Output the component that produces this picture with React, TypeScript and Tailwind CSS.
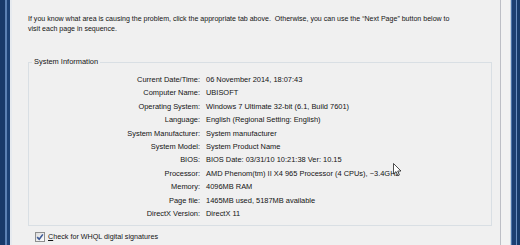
import React from "react";

const rows: [string, string][] = [
  ["Current Date/Time:", "06 November 2014, 18:07:43"],
  ["Computer Name:", "UBISOFT"],
  ["Operating System:", "Windows 7 Ultimate 32-bit (6.1, Build 7601)"],
  ["Language:", "English (Regional Setting: English)"],
  ["System Manufacturer:", "System manufacturer"],
  ["System Model:", "System Product Name"],
  ["BIOS:", "BIOS Date: 03/31/10 10:21:38 Ver: 10.15"],
  ["Processor:", "AMD Phenom(tm) II X4 965 Processor (4 CPUs), ~3.4GHz"],
  ["Memory:", "4096MB RAM"],
  ["Page file:", "1465MB used, 5187MB available"],
  ["DirectX Version:", "DirectX 11"],
];

export default function App() {
  return (
    <div className="relative flex h-[245px] w-[520px] overflow-hidden bg-[#f0f0f0] font-['Liberation_Sans',Arial,sans-serif] text-[7.45px] text-[#141414]">
      {/* left window frame */}
      <div className="w-[5px] bg-[#18396a]" />
      <div className="w-[2px] bg-[#5b80b4]" />
      <div className="w-[3px] bg-[#1c4176]" />
      <div className="w-[2px] bg-[#e6eaef]" />

      {/* tab page */}
      <div className="flex w-[489px] flex-col border-r border-[#bdbfc6] pl-[16px] pr-[8px]">
        <div className="pt-[14px] text-[7.05px] leading-[10px]">
          <div className="whitespace-nowrap">
            If you know what area is causing the problem, click the appropriate tab above.&nbsp; Otherwise, you can use the “Next Page” button below to
          </div>
          <div>visit each page in sequence.</div>
        </div>

        <div className="relative mt-[28px] h-[164px] border border-[#d9dfe4] pt-[10px]">
          <div className="absolute left-[3px] top-[-6px] bg-[#f0f0f0] px-[2px] leading-[10px]">
            System Information
          </div>
          <div className="grid grid-cols-[171px_1fr] gap-x-[6px] leading-[13.4px]">
            {rows.map(([k, v]) => (
              <React.Fragment key={k}>
                <div className="text-right">{k}</div>
                <div className="whitespace-nowrap">{v}</div>
              </React.Fragment>
            ))}
          </div>
        </div>

        <div className="mt-[6px] flex items-center gap-[3px] pl-[7px] text-[7.2px] leading-[10px]">
          <div className="flex h-[10px] w-[10px] items-center justify-center border border-[#8e8f8f] bg-gradient-to-br from-[#dcdcdc] to-[#ffffff]">
            <svg width="8" height="8" viewBox="0 0 7 7">
              <path d="M1 3.6 L2.8 5.4 L6 1.2" fill="none" stroke="#3d5a96" strokeWidth="1.4" />
            </svg>
          </div>
          <div>
            <span className="underline">C</span>heck for WHQL digital signatures
          </div>
        </div>
      </div>

      {/* right margin */}
      <div className="w-[9px] bg-[#f2f2f2]" />
      {/* right window frame */}
      <div className="w-[1px] bg-[#c5d2e2]" />
      <div className="w-[1px] bg-[#4c74a9]" />
      <div className="w-[4px] bg-[#1b3f73]" />
      <div className="w-[1px] bg-[#6a8ec0]" />
      <div className="w-[3px] bg-[#163a6b]" />

      {/* mouse cursor */}
      <svg
        className="absolute left-[393px] top-[163px]"
        width="10"
        height="14"
        viewBox="0 0 10 14"
      >
        <path
          d="M0.5 0.5 L0.5 11 L3 8.6 L4.8 12.6 L6.4 11.9 L4.7 8 L8 8 Z"
          fill="#ffffff"
          stroke="#222"
          strokeWidth="0.8"
          strokeLinejoin="round"
        />
      </svg>
    </div>
  );
}
